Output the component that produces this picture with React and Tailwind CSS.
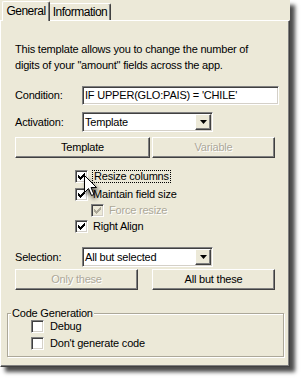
import React from "react";

const sunken =
  "border border-t-[#808080] border-l-[#808080] border-r-white border-b-white shadow-[inset_1px_1px_0_#404040,inset_-1px_-1px_0_#d4d0c8]";
const raised =
  "border border-t-white border-l-white border-r-[#404040] border-b-[#404040] shadow-[inset_-1px_-1px_0_#808080]";
const disabledText = "text-[#aca899] [text-shadow:1px_1px_0_#fff]";

// classic 7x7 check mark
const CHECK = ["......X", ".....XX", "X...XXX", "XX.XXX.", "XXXXX..", ".XXX...", "..X...."];

const Check = ({ color }) => (
  <svg width="7" height="7" viewBox="0 0 7 7" shapeRendering="crispEdges">
    {CHECK.flatMap((row, y) =>
      row.split("").map((c, x) =>
        c === "X" ? <rect key={`${x}-${y}`} x={x} y={y} width="1" height="1" fill={color} /> : null
      )
    )}
  </svg>
);

const Box = ({ checked, disabled }) => (
  <span
    className={`${sunken} w-[13px] h-[13px] shrink-0 flex items-center justify-center ${
      disabled ? "bg-[#ece9d8]" : "bg-white"
    }`}
  >
    {checked && <Check color={disabled ? "#aca899" : "#000"} />}
  </span>
);

const Dropdown = ({ value }) => (
  <div className={`${sunken} w-[131px] h-[20px] bg-white flex items-center justify-between pl-[2px] pr-[1px]`}>
    <span>{value}</span>
    <span className={`${raised} bg-[#ece9d8] w-[16px] h-[16px] flex items-center justify-center`}>
      <svg width="7" height="4" viewBox="0 0 7 4">
        <path d="M0 0h7L3.5 4z" fill="#000" />
      </svg>
    </span>
  </div>
);

const Button = ({ children, disabled, w }) => (
  <div className={`${raised} ${w} h-[21px] bg-[#ece9d8] flex items-center justify-center ${disabled ? disabledText : ""}`}>
    {children}
  </div>
);

export default function App() {
  return (
    <div className="w-[303px] h-[381px] bg-white font-['Liberation_Sans',Arial,sans-serif] text-[11px] tracking-[-0.2px] text-black">
      <div className="relative w-[290px] h-[367px] bg-[#ece9d8] flex flex-col shadow-[5px_5px_4px_rgba(0,0,0,0.7)]">
        {/* tabs */}
        <div className="flex items-end h-[20px] pl-[2px] text-[12px] tracking-[-0.5px]">
          <div className="relative z-10 w-[48px] h-[20px] -mb-px pb-[2px] bg-[#ece9d8] border-l border-t border-white border-r border-r-[#404040] rounded-t-[2px] flex items-center justify-center shadow-[inset_-1px_0_0_#808080]">
            General
          </div>
          <div className="w-[61px] h-[17px] border-t border-white border-r border-r-[#404040] rounded-tr-[2px] flex items-center justify-center shadow-[inset_-1px_0_0_#808080]">
            Information
          </div>
        </div>

        {/* page */}
        <div className="flex-1 flex flex-col pl-[14px] border-l border-t border-white border-r border-r-[#404040] border-b border-b-[#404040] shadow-[inset_-1px_-1px_0_#808080]">
          <p className="mt-[20px] leading-[16px]">
            This template allows you to change the number of
            <br />
            digits of your "amount" fields across the app.
          </p>

          <div className="mt-[13px] flex items-center h-[19px]">
            <span className="w-[67px]">Condition:</span>
            <div className={`${sunken} w-[197px] h-[19px] bg-white flex items-center pl-[2px]`}>
              IF UPPER(GLO:PAIS) = 'CHILE'
            </div>
          </div>

          <div className="mt-[7px] flex items-center h-[20px]">
            <span className="w-[67px]">Activation:</span>
            <Dropdown value="Template" />
          </div>

          <div className="mt-[5px] flex gap-[2px]">
            <Button w="w-[135px]">Template</Button>
            <Button w="w-[123px]" disabled>
              Variable
            </Button>
          </div>

          <div className="mt-[12px] ml-[60px] flex flex-col">
            <div className="h-[18px] flex items-start gap-[4px]">
              <Box checked />
              <span className="border border-dotted border-black px-[1px] leading-[11px] h-[13px]">Resize columns</span>
            </div>
            <div className="h-[16px] flex items-start gap-[5px]">
              <Box checked />
              <span className="leading-[13px]">Maintain field size</span>
            </div>
            <div className="h-[16px] ml-[16px] flex items-start gap-[5px]">
              <Box checked disabled />
              <span className={`leading-[13px] ${disabledText}`}>Force resize</span>
            </div>
            <div className="h-[13px] flex items-start gap-[5px]">
              <Box checked />
              <span className="leading-[13px]">Right Align</span>
            </div>
          </div>

          <div className="mt-[14px] flex items-center h-[20px]">
            <span className="w-[67px]">Selection:</span>
            <Dropdown value="All but selected" />
          </div>

          <div className="mt-[2px] flex gap-[14px]">
            <Button w="w-[123px]" disabled>
              Only these
            </Button>
            <Button w="w-[123px]">All but these</Button>
          </div>

          <div className="relative mt-[23px] -ml-[8px] w-[277px] h-[44px] border border-[#aca899] shadow-[1px_1px_0_#fff,inset_1px_1px_0_#fff] pt-[6px] pl-[23px] flex flex-col">
            <span className="absolute -top-[7px] left-[3px] px-[1px] bg-[#ece9d8] leading-[13px]">Code Generation</span>
            <div className="h-[17px] flex items-start gap-[6px]">
              <Box />
              <span className="leading-[13px]">Debug</span>
            </div>
            <div className="h-[17px] flex items-start gap-[6px]">
              <Box />
              <span className="leading-[13px]">Don't generate code</span>
            </div>
          </div>
        </div>

        {/* mouse pointer */}
        <svg
          className="absolute left-[84px] top-[175px] drop-shadow-[2px_3px_2px_rgba(0,0,0,0.6)]"
          width="14"
          height="22"
          viewBox="0 0 14 22"
        >
          <path d="M0.5 0.5V17.5L4.5 13.5L7.5 20.5L10 19.5L7 12.5H12.5Z" fill="#fff" stroke="#000" strokeWidth="1" />
        </svg>
      </div>
    </div>
  );
}
